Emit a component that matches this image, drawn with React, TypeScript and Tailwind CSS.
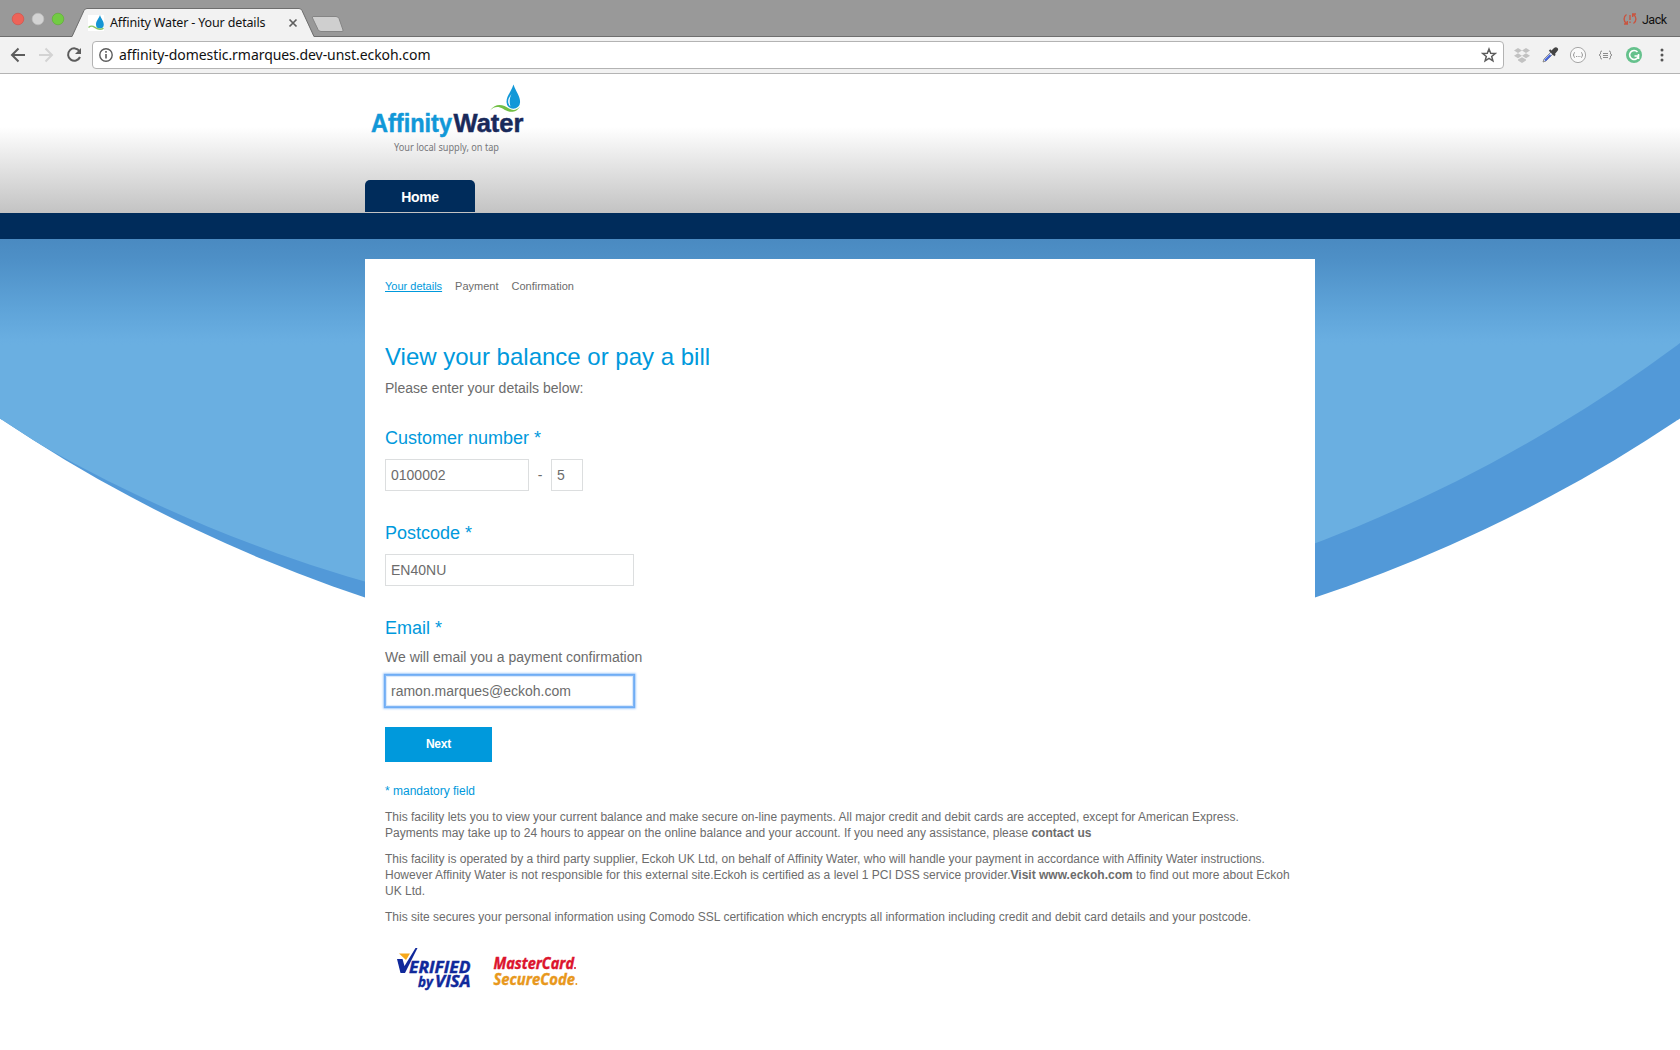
import React from "react";

const sans = "font-['Liberation_Sans',Arial,sans-serif]";

function BrowserTabs() {
  return (
    <div className="relative h-[37px] bg-[#999999]">
      <svg className="absolute inset-0" width="1680" height="37" viewBox="0 0 1680 37">
        <path d="M72 37L84 10.500Q85 8.500 87 8.500H299Q301 8.500 302 10.500L314 37Z" fill="#f2f2f2" />
        <path d="M0 36.500H72L84 10.500Q85 8.500 87 8.500H299Q301 8.500 302 10.500L314 36.500H1680" fill="none" stroke="#6e6e6e" />
        <path d="M313 16.500H336Q338 16.500 339 18.500L343 30Q343.500 31.500 342 31.500H321Q319 31.500 318 29.500L312.500 18Q312 16.500 313 16.500Z" fill="#cfcfcf" stroke="#858585" />
        <circle cx="18" cy="19" r="5.800" fill="#ed6358" stroke="#d2534a" strokeWidth=".7" />
        <circle cx="38" cy="19" r="5.800" fill="#d3d3d3" stroke="#bdbdbd" strokeWidth=".7" />
        <circle cx="58" cy="19" r="5.800" fill="#72cb43" stroke="#60af36" strokeWidth=".7" />
        <rect x="88" y="15" width="16" height="16" fill="#fff" />
        <path d="M100 15C98.500 19 96 21 96 24.500A3.900 3.900 0 0 0 103.800 24.500C103.800 21 101.200 19 100 15Z" fill="#1595d3" />
        <path d="M88.500 27.500C92 24.500 94 27 97 28.500C99.500 29.600 102 29.200 103.500 28.200" fill="none" stroke="#8bc765" strokeWidth="1.500" />
        <path d="M289.500 19.500L296.500 26.500M296.500 19.500L289.500 26.500" stroke="#5f5f5f" strokeWidth="1.700" />
        <text x="110" y="27" textLength="155.500" fontSize="12.500" fontFamily="Noto Sans, sans-serif" fill="#111">Affinity Water - Your details</text>
        <g fill="none" stroke="#c9543f" strokeWidth="1.400">
          <path d="M1626.500 14.500C1623.300 16.500 1623.300 21.500 1626.500 23.500M1624 24H1627.300V21M1633.500 23.500C1636.700 21.500 1636.700 16.500 1633.500 14.500M1636 14H1632.700V17" />
          <path d="M1630 15V20M1630 21.500V23" />
        </g>
        <text x="1642" y="24" textLength="25" fontSize="12.500" fontFamily="Roboto, sans-serif" fill="#111">Jack</text>
      </svg>
    </div>
  );
}

function Toolbar() {
  return (
    <div className="flex h-[37px] items-start border-b border-[#b4b4b4] bg-[#f2f2f2]">
      <svg className="shrink-0" width="92" height="36" viewBox="0 37 92 36" fill="none" stroke="#5c5c5c" strokeWidth="2">
        <path d="M25 55H12M18.500 48.500L12 55L18.500 61.500" />
        <path d="M39 55H52M45.500 48.500L52 55L45.500 61.500" stroke="#d3d3d3" />
        <path d="M79.500 51.200A6.200 6.200 0 1 0 80 57" />
        <path d="M81 48V54H75Z" fill="#5c5c5c" stroke="none" />
      </svg>
      <div className="mt-1 flex h-7 w-[1412px] shrink-0 items-center justify-between rounded border border-[#b3b3b3] bg-white pr-[6px] pl-[6px]">
        <svg width="340" height="26" viewBox="99 42 340 26">
          <circle cx="106" cy="55" r="6.200" fill="none" stroke="#5c5c5c" strokeWidth="1.400" />
          <path d="M106 54V58.500M106 51V52.800" stroke="#5c5c5c" strokeWidth="1.600" />
          <text x="119" y="60" textLength="311.500" fontSize="14" fontFamily="Noto Sans, sans-serif" fill="#111">affinity-domestic.rmarques.dev-unst.eckoh.com</text>
        </svg>
        <svg width="16" height="16" viewBox="0 0 16 16">
          <path d="M8 2L9.700 6.200L14.200 6.500L10.700 9.400L11.900 13.800L8 11.400L4.100 13.800L5.300 9.400L1.800 6.500L6.300 6.200Z" fill="none" stroke="#5c5c5c" strokeWidth="1.500" />
        </svg>
      </div>
      <svg className="shrink-0" width="176" height="36" viewBox="1504 37 176 36">
        <path d="M1518 48L1522 50.500L1518 53L1514 50.500ZM1526 48L1530 50.500L1526 53L1522 50.500ZM1518 53.300L1522 55.800L1518 58.300L1514 55.800ZM1526 53.300L1530 55.800L1526 58.300L1522 55.800ZM1518 59.500L1522 57.200L1526 59.500V60.500L1522 63L1518 60.500Z" fill="#c2c2c2" />
        <path d="M1543 62L1544 59L1551 52L1553 54L1546 61Z" fill="#dfe6fa" stroke="#777" strokeWidth=".8" />
        <path d="M1545 60.500L1550.500 55" stroke="#4565dc" strokeWidth="2" />
        <path d="M1549.500 50L1555 55.500" stroke="#444" strokeWidth="2" />
        <path d="M1551 51L1554 48Q1556 46.500 1557.500 48Q1559 49.500 1557 51.500L1554.500 54.500Z" fill="#444" />
        <circle cx="1578" cy="55" r="7.600" fill="#fafafa" stroke="#a7a7a7" />
        <path d="M1575 52.500Q1574 52.500 1574 53.500V54.300L1573 55L1574 55.700V56.500Q1574 57.500 1575 57.500M1581 52.500Q1582 52.500 1582 53.500V54.300L1583 55L1582 55.700V56.500Q1582 57.500 1581 57.500" fill="none" stroke="#999" />
        <path d="M1576 56.500H1580.500" stroke="#999" strokeDasharray="1 .7" />
        <path d="M1602 51Q1600.500 51 1600.500 52.300V54L1599 55L1600.500 56V57.700Q1600.500 59 1602 59M1609 51Q1610.500 51 1610.500 52.300V54L1612 55L1610.500 56V57.700Q1610.500 59 1609 59M1603 53.500H1608M1603 55.500H1608M1603 57.500H1608" fill="none" stroke="#8c8c8c" />
        <circle cx="1634" cy="55" r="8" fill="#65c18c" />
        <path d="M1637.500 52A4.500 4.500 0 1 0 1638.500 56H1634.500M1638.500 54V59" fill="none" stroke="#fff" strokeWidth="1.600" />
        <g fill="#555"><circle cx="1662" cy="50" r="1.500" /><circle cx="1662" cy="55" r="1.500" /><circle cx="1662" cy="60" r="1.500" /></g>
      </svg>
    </div>
  );
}

function Header() {
  return (
    <>
      <header className="flex h-[139px] flex-col justify-between bg-[linear-gradient(to_bottom,#fff_0,#fff_38%,#c3c3c3_100%)] pl-[365px]">
        <svg width="170" height="85" viewBox="365 74 170 85">
          <g fontFamily="Liberation Sans, Arial, sans-serif" fontWeight="700" fontSize="26.500" strokeWidth=".5">
            <text x="371" y="131.800" textLength="81" lengthAdjust="spacingAndGlyphs" fill="#1198d8" stroke="#1198d8">Affinity</text>
            <text x="453.500" y="131.800" textLength="70" lengthAdjust="spacingAndGlyphs" fill="#19295a" stroke="#19295a">Water</text>
          </g>
          <path d="M513.500 84.500C511 92 506.500 96 506.500 102A6.800 6.800 0 0 0 520.100 102C520.100 96 516 92 513.500 84.500Z" fill="#1198d8" />
          <path d="M511.500 94C507.500 99 507 103 510.500 106.500C509 102 509.500 98 511.500 94Z" fill="#fff" />
          <path d="M490 110.500C496 102 504 105 509 108.500C513 111 517 110 520 106.500C515 115 507 111.500 503 108.800C498 106 494 106.500 490 110.500Z" fill="#72bf44" />
          <text x="394" y="151" textLength="105" lengthAdjust="spacingAndGlyphs" fontFamily="Noto Sans, sans-serif" fontSize="11" fill="#77787b">Your local supply, on tap</text>
        </svg>
        <a className="mb-px flex h-8 w-[110px] items-center justify-center rounded-t-[5px] bg-[#002c5b] pt-[3px] text-[14px] font-bold tracking-[-0.300px] text-white">Home</a>
      </header>
      <div className="h-[26px] bg-[#002c5b]" />
    </>
  );
}

function Waves() {
  return (
    <svg className="absolute top-0 left-0" width="1680" height="440" viewBox="0 239 1680 440">
      <defs>
        <clipPath id="bowl"><circle cx="840" cy="-832.700" r="1507" /></clipPath>
        <linearGradient id="shade" gradientUnits="userSpaceOnUse" x1="0" y1="239" x2="0" y2="345">
          <stop offset="0" stopColor="#4a8ac1" />
          <stop offset=".2" stopColor="#4e90c7" />
          <stop offset=".65" stopColor="#5ea3d8" />
          <stop offset=".95" stopColor="#69aee1" />
          <stop offset="1" stopColor="#6aafe1" />
        </linearGradient>
      </defs>
      <circle cx="840" cy="-832.700" r="1507" fill="#5299d8" />
      <circle cx="782.500" cy="-860.300" r="1501.200" fill="url(#shade)" clipPath="url(#bowl)" />
    </svg>
  );
}

const label = "text-[18px] leading-[22px] text-[#0099dc]";
const field = "block h-8 border border-[#dcdedf] bg-white px-[5px] text-[14px] text-[#6c6c6c] outline-none";

function PaymentForm() {
  return (
    <main className="relative mx-auto min-h-[791px] w-[950px] bg-white px-5 text-[#6c6c6c]">
      <nav className="flex gap-[13px] pt-[20px] text-[11px] leading-[15px]">
        <a className="text-[#0099dc] underline underline-offset-[1px]">Your details</a>
        <a>Payment</a>
        <a>Confirmation</a>
      </nav>
      <h1 className="mt-[48px] text-[24px] leading-[30px] text-[#0099dc]">View your balance or pay a bill</h1>
      <p className="mt-[7px] text-[14px] leading-[18px]">Please enter your details below:</p>
      <h2 className={"mt-[30px] " + label}>Customer number *</h2>
      <div className="mt-[10px] flex items-center text-[14px]">
        <input className={field + " w-[144px]"} defaultValue="0100002" />
        <span className="w-[22px] text-center">-</span>
        <input className={field + " w-8"} defaultValue="5" />
      </div>
      <h2 className={"mt-[31px] " + label}>Postcode *</h2>
      <input className={field + " mt-[10px] w-[249px]"} defaultValue="EN40NU" />
      <h2 className={"mt-[31px] " + label}>Email *</h2>
      <p className="mt-[9px] text-[14px] leading-[18px]">We will email you a payment confirmation</p>
      <input
        className="mt-[9px] block h-8 w-[249px] border border-[#7fb5f5] bg-white px-[5px] text-[14px] text-[#6c6c6c] shadow-[0_0_1px_1px_#6fadf5,0_0_2px_2px_#b5d5fb,inset_0_0_1px_1px_#d6e7fb] outline-none"
        defaultValue="ramon.marques@eckoh.com"
      />
      <button className="mt-5 block h-[35px] w-[107px] bg-[#0099dc] pb-[2px] text-[12px] font-bold tracking-[-0.200px] text-white">Next</button>
      <div className="mt-[21px] text-[12px] leading-[16px]">
        <p className="text-[#0099dc]">* mandatory field</p>
        <p className="mt-[10px]">
          This facility lets you to view your current balance and make secure on-line payments. All major credit and debit cards are accepted, except for American Express.<br />
          Payments may take up to 24 hours to appear on the online balance and your account. If you need any assistance, please <b>contact us</b>
        </p>
        <p className="mt-[10px] tracking-[0.005px]">
          This facility is operated by a third party supplier, Eckoh UK Ltd, on behalf of Affinity Water, who will handle your payment in accordance with Affinity Water instructions.<br />
          However Affinity Water is not responsible for this external site.Eckoh is certified as a level 1 PCI DSS service provider.<b>Visit www.eckoh.com</b> to find out more about Eckoh<br />
          UK Ltd.
        </p>
        <p className="mt-[10px]">This site secures your personal information using Comodo SSL certification which encrypts all information including credit and debit card details and your postcode.</p>
      </div>
      <svg className="mt-[20px]" width="210" height="55" viewBox="385 945 210 55" fontFamily="Open Sans, sans-serif" fontWeight="700" fontStyle="italic" strokeWidth=".4">
        <path d="M399 953.500H410L406 960Z" fill="#f7a81b" />
        <path d="M397 959H402.500L404.500 966L415.500 948H417.500L405 973H400.500Z" fill="#10299b" />
        <g fill="#10299b" stroke="#10299b">
          <text x="409" y="972.500" fontSize="15.500" textLength="61.500" lengthAdjust="spacingAndGlyphs">ERIFIED</text>
          <text x="418" y="987" fontSize="15" textLength="15" lengthAdjust="spacingAndGlyphs">by</text>
          <text x="435" y="987" fontSize="15.500" textLength="35.500" lengthAdjust="spacingAndGlyphs">VISA</text>
        </g>
        <text x="493.500" y="969" fontSize="15.500" textLength="80.500" lengthAdjust="spacingAndGlyphs" fill="#dc142d" stroke="#dc142d">MasterCard</text>
        <text x="493.500" y="985" fontSize="15.500" textLength="81.500" lengthAdjust="spacingAndGlyphs" fill="#e8981c" stroke="#e8981c">SecureCode</text>
        <circle cx="575" cy="968" r="1" fill="#dc142d" />
        <circle cx="576.300" cy="984" r="1" fill="#e8981c" />
      </svg>
    </main>
  );
}

export default function App() {
  return (
    <div className={"h-[1050px] w-[1680px] overflow-hidden bg-white " + sans}>
      <BrowserTabs />
      <Toolbar />
      <Header />
      <div className="relative pt-5">
        <Waves />
        <PaymentForm />
      </div>
    </div>
  );
}
